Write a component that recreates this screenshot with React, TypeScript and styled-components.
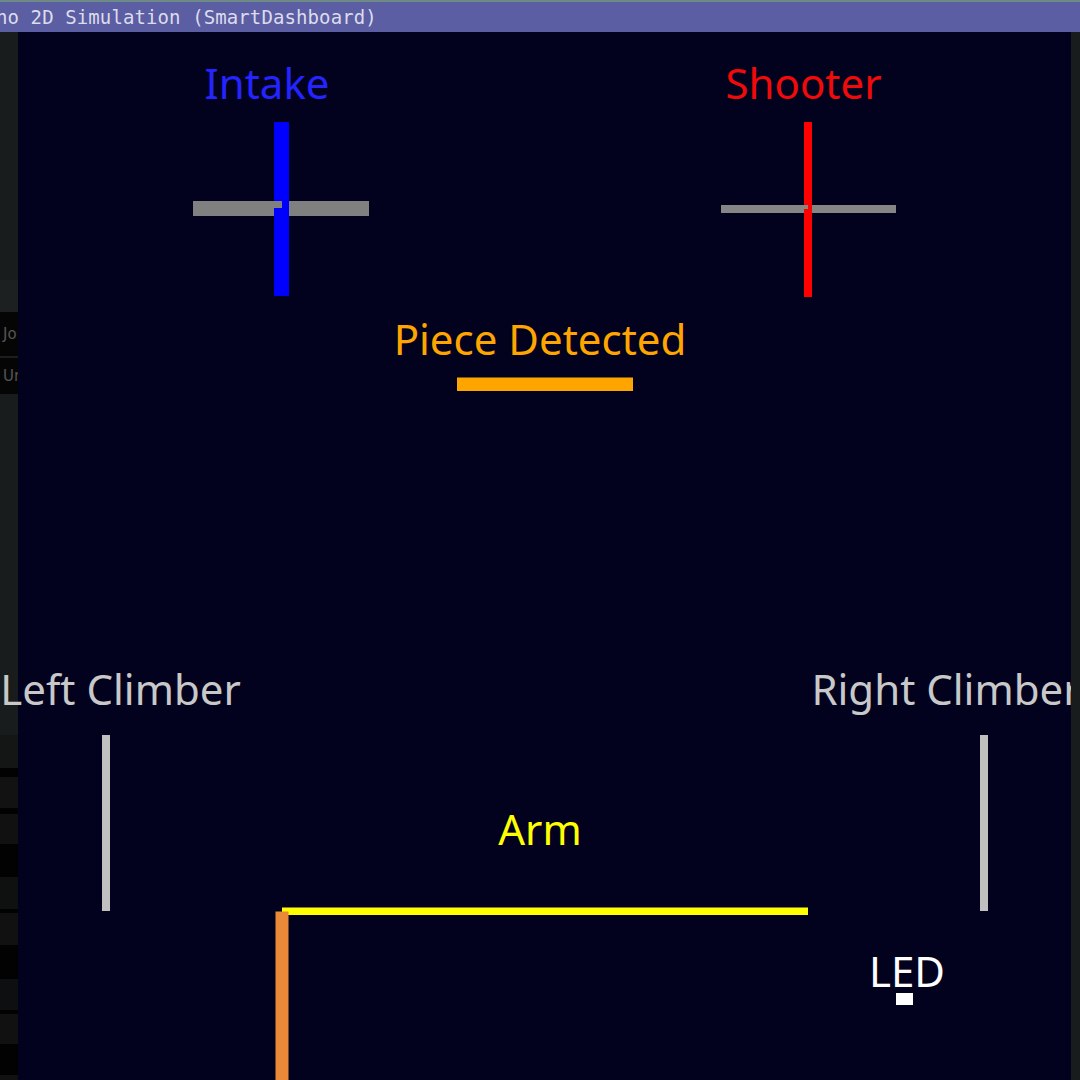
import React from "react";
import styled, { createGlobalStyle } from "styled-components";

const GlobalStyle = createGlobalStyle`
  html, body {
    margin: 0;
    padding: 0;
    background: #02021e;
    overflow: hidden;
  }
`;

const Window = styled.div`
  width: 1080px;
  height: 1080px;
  display: flex;
  flex-direction: column;
  overflow: hidden;
`;

const TitleBar = styled.div`
  height: 30px;
  flex: none;
  border-top: 2px solid #6e8a86;
  background: #5b5ea2;
  color: #dcdcec;
  font-family: "DejaVu Sans Mono", monospace;
  font-size: 19px;
  line-height: 30px;
  white-space: nowrap;
  overflow: hidden;
`;

const TitleText = styled.span`
  display: inline-block;
  margin-left: -4px;
  letter-spacing: 0.1px;
`;

const Body = styled.div`
  flex: 1;
  display: flex;
  flex-direction: row;
  min-height: 0;
`;

const LeftStrip = styled.div`
  width: 18px;
  flex: none;
  display: flex;
  flex-direction: column;
  background: #181c1c;
`;

const StripRow = styled.div<{ $h: number; $bg: string }>`
  height: ${({ $h }) => $h}px;
  flex: none;
  background: ${({ $bg }) => $bg};
  color: #555;
  font-family: "DejaVu Sans", sans-serif;
  font-size: 15px;
  line-height: ${({ $h }) => $h}px;
  padding-left: 3px;
  overflow: hidden;
  white-space: nowrap;
`;

const RightStrip = styled.div`
  width: 9px;
  flex: none;
  background: #181c1c;
  position: relative;
  z-index: 2;
`;

const Canvas = styled.div`
  flex: 1;
  position: relative;
  background: #02021e;
  z-index: 1;
`;

const Drawing = styled.svg`
  display: block;
  width: 1053px;
  height: 1048px;
`;

const Label = styled.div<{ $color: string }>`
  position: absolute;
  transform: translateX(-50%);
  color: ${({ $color }) => $color};
  font-family: "Noto Sans", "Open Sans", sans-serif;
  font-size: 42px;
  line-height: 1;
  white-space: nowrap;
`;

// canvas origin on the page
const OX = 18;
const OY = 32;
// distance from a label's top to its baseline at 42px
const ASC = 37.3;

type Part = { text: string; cx: number; baseline: number; color: string };

const labels: Part[] = [
  { text: "Intake", cx: 267, baseline: 99.5, color: "#2424ff" },
  { text: "Shooter", cx: 803.5, baseline: 99.5, color: "#f00a0a" },
  { text: "Piece Detected", cx: 540, baseline: 355.5, color: "#ffa500" },
  { text: "Left Climber", cx: 120.5, baseline: 705.5, color: "#c8c8c8" },
  { text: "Right Climber", cx: 946, baseline: 705.5, color: "#c8c8c8" },
  { text: "Arm", cx: 540, baseline: 845.5, color: "#ffff00" },
  { text: "LED", cx: 907, baseline: 987, color: "#ffffff" },
];

type Bar = { x: number; y: number; w: number; h: number; fill: string };

// ligaments, in page coordinates
const bars: Bar[] = [
  { x: 193, y: 201, w: 176, h: 15, fill: "#808080" },
  { x: 274, y: 122, w: 15, h: 174, fill: "#0000ff" },
  { x: 274, y: 201, w: 8, h: 7, fill: "#808080" },
  { x: 721, y: 205, w: 175, h: 8, fill: "#858585" },
  { x: 804, y: 122, w: 8, h: 175, fill: "#ff0000" },
  { x: 804, y: 205, w: 4, h: 4, fill: "#858585" },
  { x: 457, y: 377.5, w: 176, h: 13.5, fill: "#ffa500" },
  { x: 102, y: 735, w: 8, h: 176, fill: "#c0c0c0" },
  { x: 980, y: 735, w: 8, h: 176, fill: "#c0c0c0" },
  { x: 282, y: 907.5, w: 526, h: 7.5, fill: "#ffff00" },
  { x: 275.5, y: 911.5, w: 13, h: 170, fill: "#ea8a38" },
  { x: 896, y: 993, w: 17, h: 12, fill: "#ffffff" },
];

const stripRows: [number, string, string?][] = [
  [248, "#181c1c"],
  [32, "#1c2020"],
  [44, "#050505", "Jo"],
  [2, "#1a1e1e"],
  [36, "#050505", "Ur"],
  [341, "#181c1c"],
  [33, "#141616"],
  [9, "#020202"],
  [31, "#121212"],
  [6, "#020202"],
  [30, "#111111"],
  [33, "#020202"],
  [32, "#0f1010"],
  [4, "#020202"],
  [32, "#111111"],
  [34, "#020202"],
  [31, "#0e0f10"],
  [4, "#020202"],
  [30, "#111111"],
  [31, "#020202"],
  [10, "#111111"],
];

const App: React.FC = () => {
  return (
    <Window>
      <GlobalStyle />
      <TitleBar>
        <TitleText>no 2D Simulation (SmartDashboard)</TitleText>
      </TitleBar>
      <Body>
        <LeftStrip>
          {stripRows.map(([h, bg, t], i) => (
            <StripRow key={i} $h={h} $bg={bg}>
              {t}
            </StripRow>
          ))}
        </LeftStrip>
        <Canvas>
          <Drawing viewBox={`${OX} ${OY} 1053 1048`}>
            {bars.map((b, i) => (
              <rect key={i} x={b.x} y={b.y} width={b.w} height={b.h} fill={b.fill} />
            ))}
          </Drawing>
          {labels.map((l) => (
            <Label
              key={l.text}
              $color={l.color}
              style={{ left: l.cx - OX, top: l.baseline - ASC - OY }}
            >
              {l.text}
            </Label>
          ))}
        </Canvas>
        <RightStrip />
      </Body>
    </Window>
  );
};

export default App;
